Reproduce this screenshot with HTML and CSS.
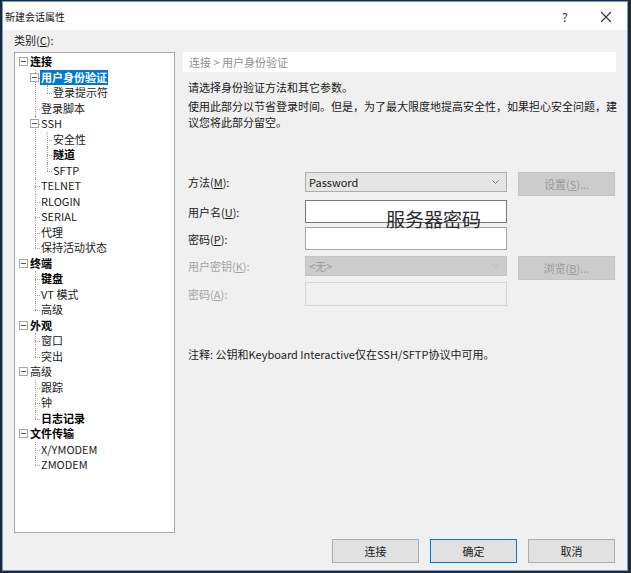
FILE: index.html
```html
<!DOCTYPE html>
<html lang="zh-CN">
<head>
    <meta charset="UTF-8">
    <title>新建会话属性</title>
    <link rel="stylesheet" href="styles.css">
</head>
<body>
<div class="window">
    <div class="titlebar">
        <span class="title">新建会话属性</span>
        <span class="help">?</span>
        <span class="close">
            <svg width="12" height="12" viewBox="0 0 12 12"><path d="M1 1L11 11M11 1L1 11" stroke="#333" stroke-width="1.1" fill="none"/></svg>
        </span>
    </div>

    <div class="content">
        <div class="category-label">类别(<u>C</u>):</div>
        <div class="main">
            <ul class="tree">
                <li>
                    <div class="row"><span class="toggle"></span><span class="text bold">连接</span></div>
                    <ul>
                        <li>
                            <div class="row"><span class="toggle"></span><span class="text bold selected">用户身份验证</span></div>
                            <ul>
                                <li><div class="row"><span class="text">登录提示符</span></div></li>
                            </ul>
                        </li>
                        <li><div class="row"><span class="text">登录脚本</span></div></li>
                        <li>
                            <div class="row"><span class="toggle"></span><span class="text">SSH</span></div>
                            <ul>
                                <li><div class="row"><span class="text">安全性</span></div></li>
                                <li><div class="row"><span class="text bold">隧道</span></div></li>
                                <li><div class="row"><span class="text">SFTP</span></div></li>
                            </ul>
                        </li>
                        <li><div class="row"><span class="text">TELNET</span></div></li>
                        <li><div class="row"><span class="text">RLOGIN</span></div></li>
                        <li><div class="row"><span class="text">SERIAL</span></div></li>
                        <li><div class="row"><span class="text">代理</span></div></li>
                        <li><div class="row"><span class="text">保持活动状态</span></div></li>
                    </ul>
                </li>
                <li>
                    <div class="row"><span class="toggle"></span><span class="text bold">终端</span></div>
                    <ul>
                        <li><div class="row"><span class="text bold">键盘</span></div></li>
                        <li><div class="row"><span class="text">VT 模式</span></div></li>
                        <li><div class="row"><span class="text">高级</span></div></li>
                    </ul>
                </li>
                <li>
                    <div class="row"><span class="toggle"></span><span class="text bold">外观</span></div>
                    <ul>
                        <li><div class="row"><span class="text">窗口</span></div></li>
                        <li><div class="row"><span class="text">突出</span></div></li>
                    </ul>
                </li>
                <li>
                    <div class="row"><span class="toggle"></span><span class="text">高级</span></div>
                    <ul>
                        <li><div class="row"><span class="text">跟踪</span></div></li>
                        <li><div class="row"><span class="text">钟</span></div></li>
                        <li><div class="row"><span class="text bold">日志记录</span></div></li>
                    </ul>
                </li>
                <li>
                    <div class="row"><span class="toggle"></span><span class="text bold">文件传输</span></div>
                    <ul>
                        <li><div class="row"><span class="text">X/YMODEM</span></div></li>
                        <li><div class="row"><span class="text">ZMODEM</span></div></li>
                    </ul>
                </li>
            </ul>

            <section class="panel">
                <div class="panel-header">连接 &gt; 用户身份验证</div>
                <p class="desc first">请选择身份验证方法和其它参数。</p>
                <p class="desc">使用此部分以节省登录时间。但是，为了最大限度地提高安全性，如果担心安全问题，建议您将此部分留空。</p>

                <div class="form">
                    <div class="form-row r1">
                        <label>方法(<u>M</u>):</label>
                        <div class="select">Password
                            <svg class="chev" width="7" height="4" viewBox="0 0 7 4"><path d="M0.5 0.5L3.5 3.5L6.5 0.5" stroke="#777" fill="none"/></svg>
                        </div>
                        <span></span>
                        <div class="btn disabled">设置(<u>S</u>)...</div>
                    </div>
                    <div class="form-row r2">
                        <label>用户名(<u>U</u>):</label>
                        <div class="input"></div>
                    </div>
                    <div class="form-row r3">
                        <label>密码(<u>P</u>):</label>
                        <div class="input"></div>
                    </div>
                    <div class="form-row r4">
                        <label class="off">用户密钥(<u>K</u>):</label>
                        <div class="select disabled">&lt;无&gt;
                            <svg class="chev" width="7" height="4" viewBox="0 0 7 4"><path d="M0.5 0.5L3.5 3.5L6.5 0.5" stroke="#b8b8b8" fill="none"/></svg>
                        </div>
                        <span></span>
                        <div class="btn disabled">浏览(<u>B</u>)...</div>
                    </div>
                    <div class="form-row r5">
                        <label class="off">密码(<u>A</u>):</label>
                        <div class="input disabled"></div>
                    </div>
                    <div class="annotation">服务器密码</div>
                </div>

                <p class="note">注释: 公钥和Keyboard Interactive仅在SSH/SFTP协议中可用。</p>
            </section>
        </div>

        <div class="footer">
            <div class="btn">连接</div>
            <div class="btn default">确定</div>
            <div class="btn">取消</div>
        </div>
    </div>
</div>
</body>
</html>
```

FILE: styles.css
```css
body {
    margin: 0;
    background: #1f2a36;
    font-family: "Noto Sans CJK SC", "Noto Sans", sans-serif;
    font-size: 11px;
    color: #1a1a1a;
}

.window {
    margin: 1px 2px 0 2px;
    width: 624px;
    height: 568px;
    border: 1px solid #6b9fd6;
    display: flex;
    flex-direction: column;
    background: #f0f0f0;
}

.titlebar {
    height: 28px;
    background: #ffffff;
    display: flex;
    align-items: center;
    position: relative;
}

.title {
    margin-left: 2px;
    font-size: 10px;
    color: #111;
}

.help {
    position: absolute;
    left: 559px;
    top: 6px;
    font-size: 12px;
    color: #333;
}

.close {
    position: absolute;
    left: 597px;
    top: 8px;
    width: 12px;
    height: 12px;
}

.content {
    flex: 1;
    display: flex;
    flex-direction: column;
    padding: 3px 11px 6px 11px;
}

.category-label {
    height: 14px;
    line-height: 14px;
    margin-bottom: 5px;
}

.main {
    display: flex;
    height: 481px;
    gap: 8px;
}

/* tree */
.tree {
    width: 159px;
    margin: 0;
    padding: 1px 0 0 0;
    list-style: none;
    background: #ffffff;
    border: 1px solid #a9a9a9;
    overflow: hidden;
}

.tree ul {
    list-style: none;
    margin: 0;
    padding: 0;
}

.tree > li > ul {
    padding-left: 11px;
}

.tree ul ul {
    padding-left: 12px;
}

.tree li {
    position: relative;
}

.tree ul li::before {
    content: "";
    position: absolute;
    left: 9px;
    top: 0;
    bottom: 0;
    border-left: 1px dotted #a0a0a0;
}

.tree ul li:last-child::before {
    bottom: auto;
    height: 8px;
}

.tree ul li::after {
    content: "";
    position: absolute;
    left: 9px;
    top: 8px;
    width: 5px;
    border-top: 1px dotted #a0a0a0;
}

.row {
    position: relative;
    height: 15.5px;
    line-height: 15.5px;
    padding-left: 15px;
    white-space: nowrap;
}

.toggle {
    position: absolute;
    left: 4px;
    top: 3px;
    width: 7px;
    height: 7px;
    border: 1px solid #a6a6a6;
    background: #ffffff;
    z-index: 1;
}

.toggle::after {
    content: "";
    position: absolute;
    left: 1px;
    top: 3px;
    width: 5px;
    height: 1px;
    background: #555;
}

.text {
    display: inline-block;
    padding: 0 1px;
    margin-left: -1px;
}

.bold {
    font-weight: bold;
    color: #000;
}

.selected {
    background: #0078d7;
    color: #ffffff;
}

/* right panel */
.panel {
    flex: 1;
    padding-left: 5px;
    margin-right: -5px;
}

.panel-header {
    margin-left: -5px;
    margin-right: 5px;
    height: 20px;
    line-height: 20px;
    padding-left: 6px;
    background: #ffffff;
    color: #8f8f8f;
}

.desc {
    margin: 3px 0 0 0;
    width: 432px;
    line-height: 16px;
}

.desc.first {
    margin-top: 7px;
}

.form {
    position: relative;
    margin-top: 42px;
}

.form-row {
    display: grid;
    grid-template-columns: 117px 202px 11px 97px;
    grid-template-rows: minmax(0, 1fr);
    align-items: start;
}

.form-row label {
    align-self: center;
}

.r1 { height: 20px; margin-bottom: 8px; }
.r2 { height: 23px; margin-bottom: 4px; }
.r3 { height: 23px; margin-bottom: 6px; }
.r4 { height: 20px; margin-bottom: 6px; }
.r5 { height: 24px; }

.off {
    color: #a3a3a3;
}

.select {
    position: relative;
    height: 18px;
    line-height: 18px;
    padding-left: 3px;
    border: 1px solid #adadad;
    background: #e5e5e5;
}

.select.disabled {
    background: #cccccc;
    border-color: #c4c4c4;
    color: #9a9a9a;
}

.chev {
    position: absolute;
    right: 7px;
    top: 7px;
}

.input {
    height: 21px;
    border: 1px solid #7a7a7a;
    background: #ffffff;
}

.r3 .input {
    border-color: #a5a5a5;
}

.input.disabled {
    height: 22px;
    border-color: #d4d4d4;
    background: #f0f0f0;
}

.btn {
    height: 22px;
    line-height: 22px;
    text-align: center;
    border: 1px solid #adadad;
    background: #e1e1e1;
}

.btn.disabled {
    background: #cccccc;
    border-color: #c4c4c4;
    color: #9a9a9a;
}

.annotation {
    position: absolute;
    left: 198px;
    top: 35px;
    font-size: 19px;
    line-height: 24px;
    color: #2a2a2a;
}

.note {
    margin: 40px 0 0 0;
    line-height: 16px;
}

.footer {
    margin-top: 6px;
    display: flex;
    justify-content: flex-end;
    gap: 11px;
    padding-right: 1px;
}

.footer .btn {
    width: 85px;
}

.footer .default {
    border-color: #0078d7;
}
```
